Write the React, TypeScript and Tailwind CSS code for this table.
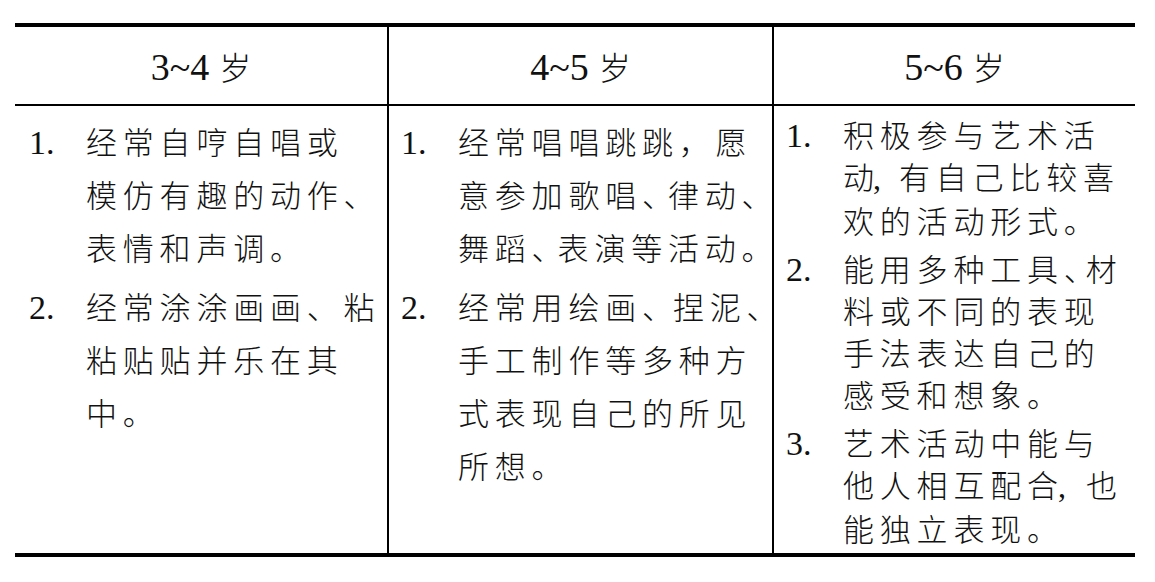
import React from "react";

type ItemData = { num: string; lines: React.ReactNode[] };

function Item({ num, lines, lineCls }: { num: string; lines: React.ReactNode[]; lineCls: string }) {
  return (
    <div className="flex items-baseline">
      <span className={"w-[57px] shrink-0 font-[family-name:'Liberation_Serif',serif] text-[34px] " + lineCls}>{num}</span>
      <div className="font-[family-name:'Noto_Sans_CJK_SC',sans-serif] font-light text-[31px] tracking-[5.8px]">
        {lines.map((l, i) => (
          <div key={i} className={"whitespace-nowrap " + lineCls}>
            {l}
          </div>
        ))}
      </div>
    </div>
  );
}

function Cell({ items, lineCls, cls }: { items: ItemData[]; lineCls: string; cls: string }) {
  return (
    <div className={cls}>
      <div className="flex flex-col gap-[6px]">
        {items.map((it, i) => (
          <Item key={i} num={it.num} lines={it.lines} lineCls={lineCls} />
        ))}
      </div>
    </div>
  );
}

function Head({ a, cls }: { a: string; cls: string }) {
  return (
    <div className={cls}>
      <div className="h-[77px] pt-[4px] text-center font-[family-name:'Liberation_Serif',serif] text-[38px] leading-[73px] text-[#111]">
        {a}
        <span className="ml-[10px] font-[family-name:'Noto_Sans_CJK_SC',sans-serif] font-light text-[32px] leading-none">岁</span>
      </div>
    </div>
  );
}

export default function App() {
  const col1: ItemData[] = [
    { num: "1.", lines: ["经常自哼自唱或", "模仿有趣的动作、", "表情和声调。"] },
    { num: "2.", lines: ["经常涂涂画画、粘", "粘贴贴并乐在其", "中。"] },
  ];
  const col2: ItemData[] = [
    {
      num: "1.",
      lines: [
        "经常唱唱跳跳，愿",
        <>
          意参加歌唱<span className="inline-block w-[26px] tracking-normal">、</span>律动、
        </>,
        <>
          舞蹈<span className="inline-block w-[26px] tracking-normal">、</span>表演等活动。
        </>,
      ],
    },
    {
      num: "2.",
      lines: [
        <>
          经常用绘画<span className="inline-block w-[31px] tracking-normal">、</span>捏泥、
        </>,
        "手工制作等多种方",
        "式表现自己的所见",
        "所想。",
      ],
    },
  ];
  const col3: ItemData[] = [
    {
      num: "1.",
      lines: [
        "积极参与艺术活",
        <>
          <span className="inline-block w-[30px] tracking-normal">动</span>
          <span className="inline-block w-[26px] font-[family-name:'Liberation_Serif',serif] text-[32px] tracking-normal">,</span>
          有自己比较喜
        </>,
        "欢的活动形式。",
      ],
    },
    {
      num: "2.",
      lines: [
        <>
          能用多种工具<span className="inline-block w-[22px] tracking-normal">、</span>材
        </>,
        "料或不同的表现",
        "手法表达自己的",
        "感受和想象。",
      ],
    },
    {
      num: "3.",
      lines: [
        "艺术活动中能与",
        <>
          他人相互配
          <span className="inline-block w-[31px] tracking-normal">合</span>
          <span className="inline-block w-[28px] font-[family-name:'Liberation_Serif',serif] text-[32px] tracking-normal">,</span>
          也
        </>,
        "能独立表现。",
      ],
    },
  ];

  return (
    <div className="h-[582px] w-[1155px] overflow-hidden bg-white pl-[15px] pt-[23px] text-[#111]">
      <div className="w-[1120px] border-t-4 border-b-4 border-black">
        <div className="grid grid-cols-[372px_385px_363px] border-b-2 border-black">
          <Head a="3~4" cls="" />
          <Head a="4~5" cls="border-l-2 border-black" />
          <Head a="5~6" cls="border-l-2 border-black" />
        </div>
        <div className="grid h-[447px] grid-cols-[372px_385px_363px]">
          <Cell items={col1} lineCls="leading-[53px]" cls="pl-[14px] pt-[8px]" />
          <Cell items={col2} lineCls="leading-[53px]" cls="border-l-2 border-black pl-[12px] pt-[8px]" />
          <Cell items={col3} lineCls="leading-[42px]" cls="border-l-2 border-black pl-[12px] pt-[7px]" />
        </div>
      </div>
    </div>
  );
}
